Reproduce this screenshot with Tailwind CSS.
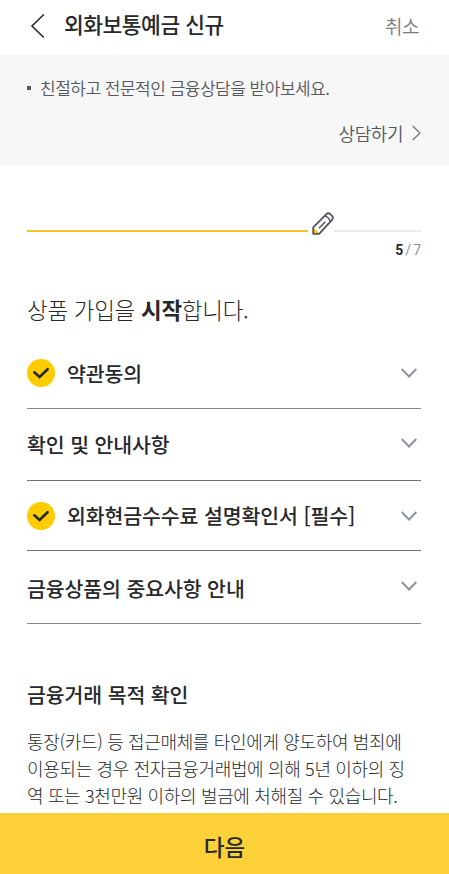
<!DOCTYPE html>
<html lang="ko">
<head>
    <meta charset="UTF-8">
    <meta name="viewport" content="width=device-width, initial-scale=1.0">
    <title>외화보통예금 신규</title>
    <!-- Tailwind CSS for styling -->
    <script src="https://cdn.jsdelivr.net/npm/@tailwindcss/browser@4"></script>
    <style>
        body {
            font-family: 'Noto Sans CJK KR', sans-serif;
        }
    </style>
</head>
<body class="bg-white text-[#26282c]">

    <div class="h-[874px] flex flex-col overflow-hidden whitespace-nowrap">

        <!-- Header -->
        <header class="h-[55px] shrink-0 flex items-center pl-[30px] pr-[30px] pb-1">
            <svg class="w-4 h-7 shrink-0" viewBox="0 0 16 28" fill="none" stroke="#26282c" stroke-width="1.6">
                <path d="M13.8 2.5 2 14 13.8 25.5"/>
            </svg>
            <h1 class="-mt-1 ml-[18px] text-[21.5px] leading-7 font-medium tracking-[-0.5px]">외화보통예금 신규</h1>
            <button class="ml-auto text-[19px] leading-7 font-[350] tracking-[-0.5px] text-[#777b84]">취소</button>
        </header>

        <!-- Consultation notice -->
        <section class="h-[110px] shrink-0 bg-[#f7f7f7] text-[#54575f] pt-[19px] pl-[27px] pr-7">
            <div class="flex items-center h-7">
                <span class="w-1 h-1 bg-[#54575f]"></span>
                <p class="ml-[9px] text-[17px] font-[350] tracking-[-0.5px]">친절하고 전문적인 금융상담을 받아보세요.</p>
            </div>
            <a class="mt-[17px] flex items-center justify-end h-7 text-[18px] font-[350] tracking-[-0.45px]">
                상담하기
                <svg class="ml-[9px] w-[9px] h-4" viewBox="0 0 9 16" fill="none" stroke="#70747c" stroke-width="1.2">
                    <path d="M.7 1 8 8 .7 15"/>
                </svg>
            </a>
        </section>

        <main class="flex-1 pl-[27px] pr-7 min-h-0">
            <!-- Progress -->
            <div class="pt-[45px] flex items-end h-[71px]">
                <div class="w-[281px] h-[2px] mb-1 bg-[#fbbf24]"></div>
                <svg class="ml-1 w-[22px] h-[23px] mb-px" viewBox="0 0 22 23" fill="none" stroke="#55565d" stroke-width="1.8" stroke-linejoin="round">
                    <path d="M1.2 15.5 7.5 21.7H1.2Z" fill="#ffc20e" stroke="none"/>
                    <path d="M1.2 21.8V15.3L14.4 2.1Q16.4.3 18.4 2.1L20 3.8Q21.8 5.8 20 7.8L7.2 21.8Z"/>
                    <path d="M12.6 4Q16.8 4.8 18.2 9.5M7 16.2 13.3 9.8" stroke-width="1.5"/>
                </svg>
                <div class="flex-1 h-[2px] mb-1 bg-[#e9ecef]"></div>
            </div>
            <p class="h-[28px] flex items-center justify-end gap-[2px] font-[Roboto] text-[14px] text-[#8c9199]">
                <b class="font-bold text-[#26282c]">5</b><span>/</span><span>7</span>
            </p>

            <h2 class="mt-[28px] h-[34px] text-[22.5px] leading-[34px] font-light tracking-[-0.3px]">상품 가입을 <b class="font-bold">시작</b>합니다.</h2>

            <!-- Agreement list -->
            <ul class="mt-[12px] text-[20.5px] font-medium tracking-[-0.1px]">
                <li class="h-[71px] flex items-center border-b border-[#85868a]">
                    <svg class="w-7 h-7 mr-3" viewBox="0 0 28 28" fill="none">
                        <circle cx="14" cy="14" r="14" fill="#ffcc00"/>
                        <path d="m7.3 13.3 5.3 4.7 8-7.8" stroke="#26282c" stroke-width="2.6" stroke-linecap="round"/>
                    </svg>
                    <span>약관동의</span>
                    <svg class="ml-auto mr-1 w-4 h-[10px]" viewBox="0 0 16 10" fill="none" stroke="#8c939f" stroke-width="2">
                        <path d="m.7 1 7.3 7.5L15.3 1"/>
                    </svg>
                </li>
                <li class="h-[72px] flex items-center border-b border-[#6f7075]">
                    <span>확인 및 안내사항</span>
                    <svg class="ml-auto mr-1 -mt-1 w-4 h-[10px]" viewBox="0 0 16 10" fill="none" stroke="#8c939f" stroke-width="2">
                        <path d="m.7 1 7.3 7.5L15.3 1"/>
                    </svg>
                </li>
                <li class="h-[70px] flex items-center border-b border-[#6f7075]">
                    <svg class="w-7 h-7 mr-3" viewBox="0 0 28 28" fill="none">
                        <circle cx="14" cy="14" r="14" fill="#ffcc00"/>
                        <path d="m7.3 13.3 5.3 4.7 8-7.8" stroke="#26282c" stroke-width="2.6" stroke-linecap="round"/>
                    </svg>
                    <span>외화현금수수료 설명확인서 [필수]</span>
                    <svg class="ml-auto mr-1 w-4 h-[10px]" viewBox="0 0 16 10" fill="none" stroke="#8c939f" stroke-width="2">
                        <path d="m.7 1 7.3 7.5L15.3 1"/>
                    </svg>
                </li>
                <li class="h-[73px] flex items-center border-b border-[#85868a]">
                    <span class="mt-[3px]">금융상품의 중요사항 안내</span>
                    <svg class="ml-auto mr-1 -mt-[2px] w-4 h-[10px]" viewBox="0 0 16 10" fill="none" stroke="#8c939f" stroke-width="2">
                        <path d="m.7 1 7.3 7.5L15.3 1"/>
                    </svg>
                </li>
            </ul>

            <!-- Purpose of transaction -->
            <h3 class="mt-[55px] text-[20.5px] leading-[30px] font-medium tracking-[-0.1px]">금융거래 목적 확인</h3>
            <p class="mt-[19px] text-[18px] leading-[27px] font-light tracking-[-0.35px]">
                통장(카드) 등 접근매체를 타인에게 양도하여 범죄에<br>
                이용되는 경우 전자금융거래법에 의해 5년 이하의 징<br>
                역 또는 3천만원 이하의 벌금에 처해질 수 있습니다.
            </p>
        </main>

        <!-- Bottom button -->
        <button class="h-[61px] shrink-0 bg-[#ffd138] pt-[6px] text-[22.5px] font-medium">다음</button>
    </div>

</body>
</html>
